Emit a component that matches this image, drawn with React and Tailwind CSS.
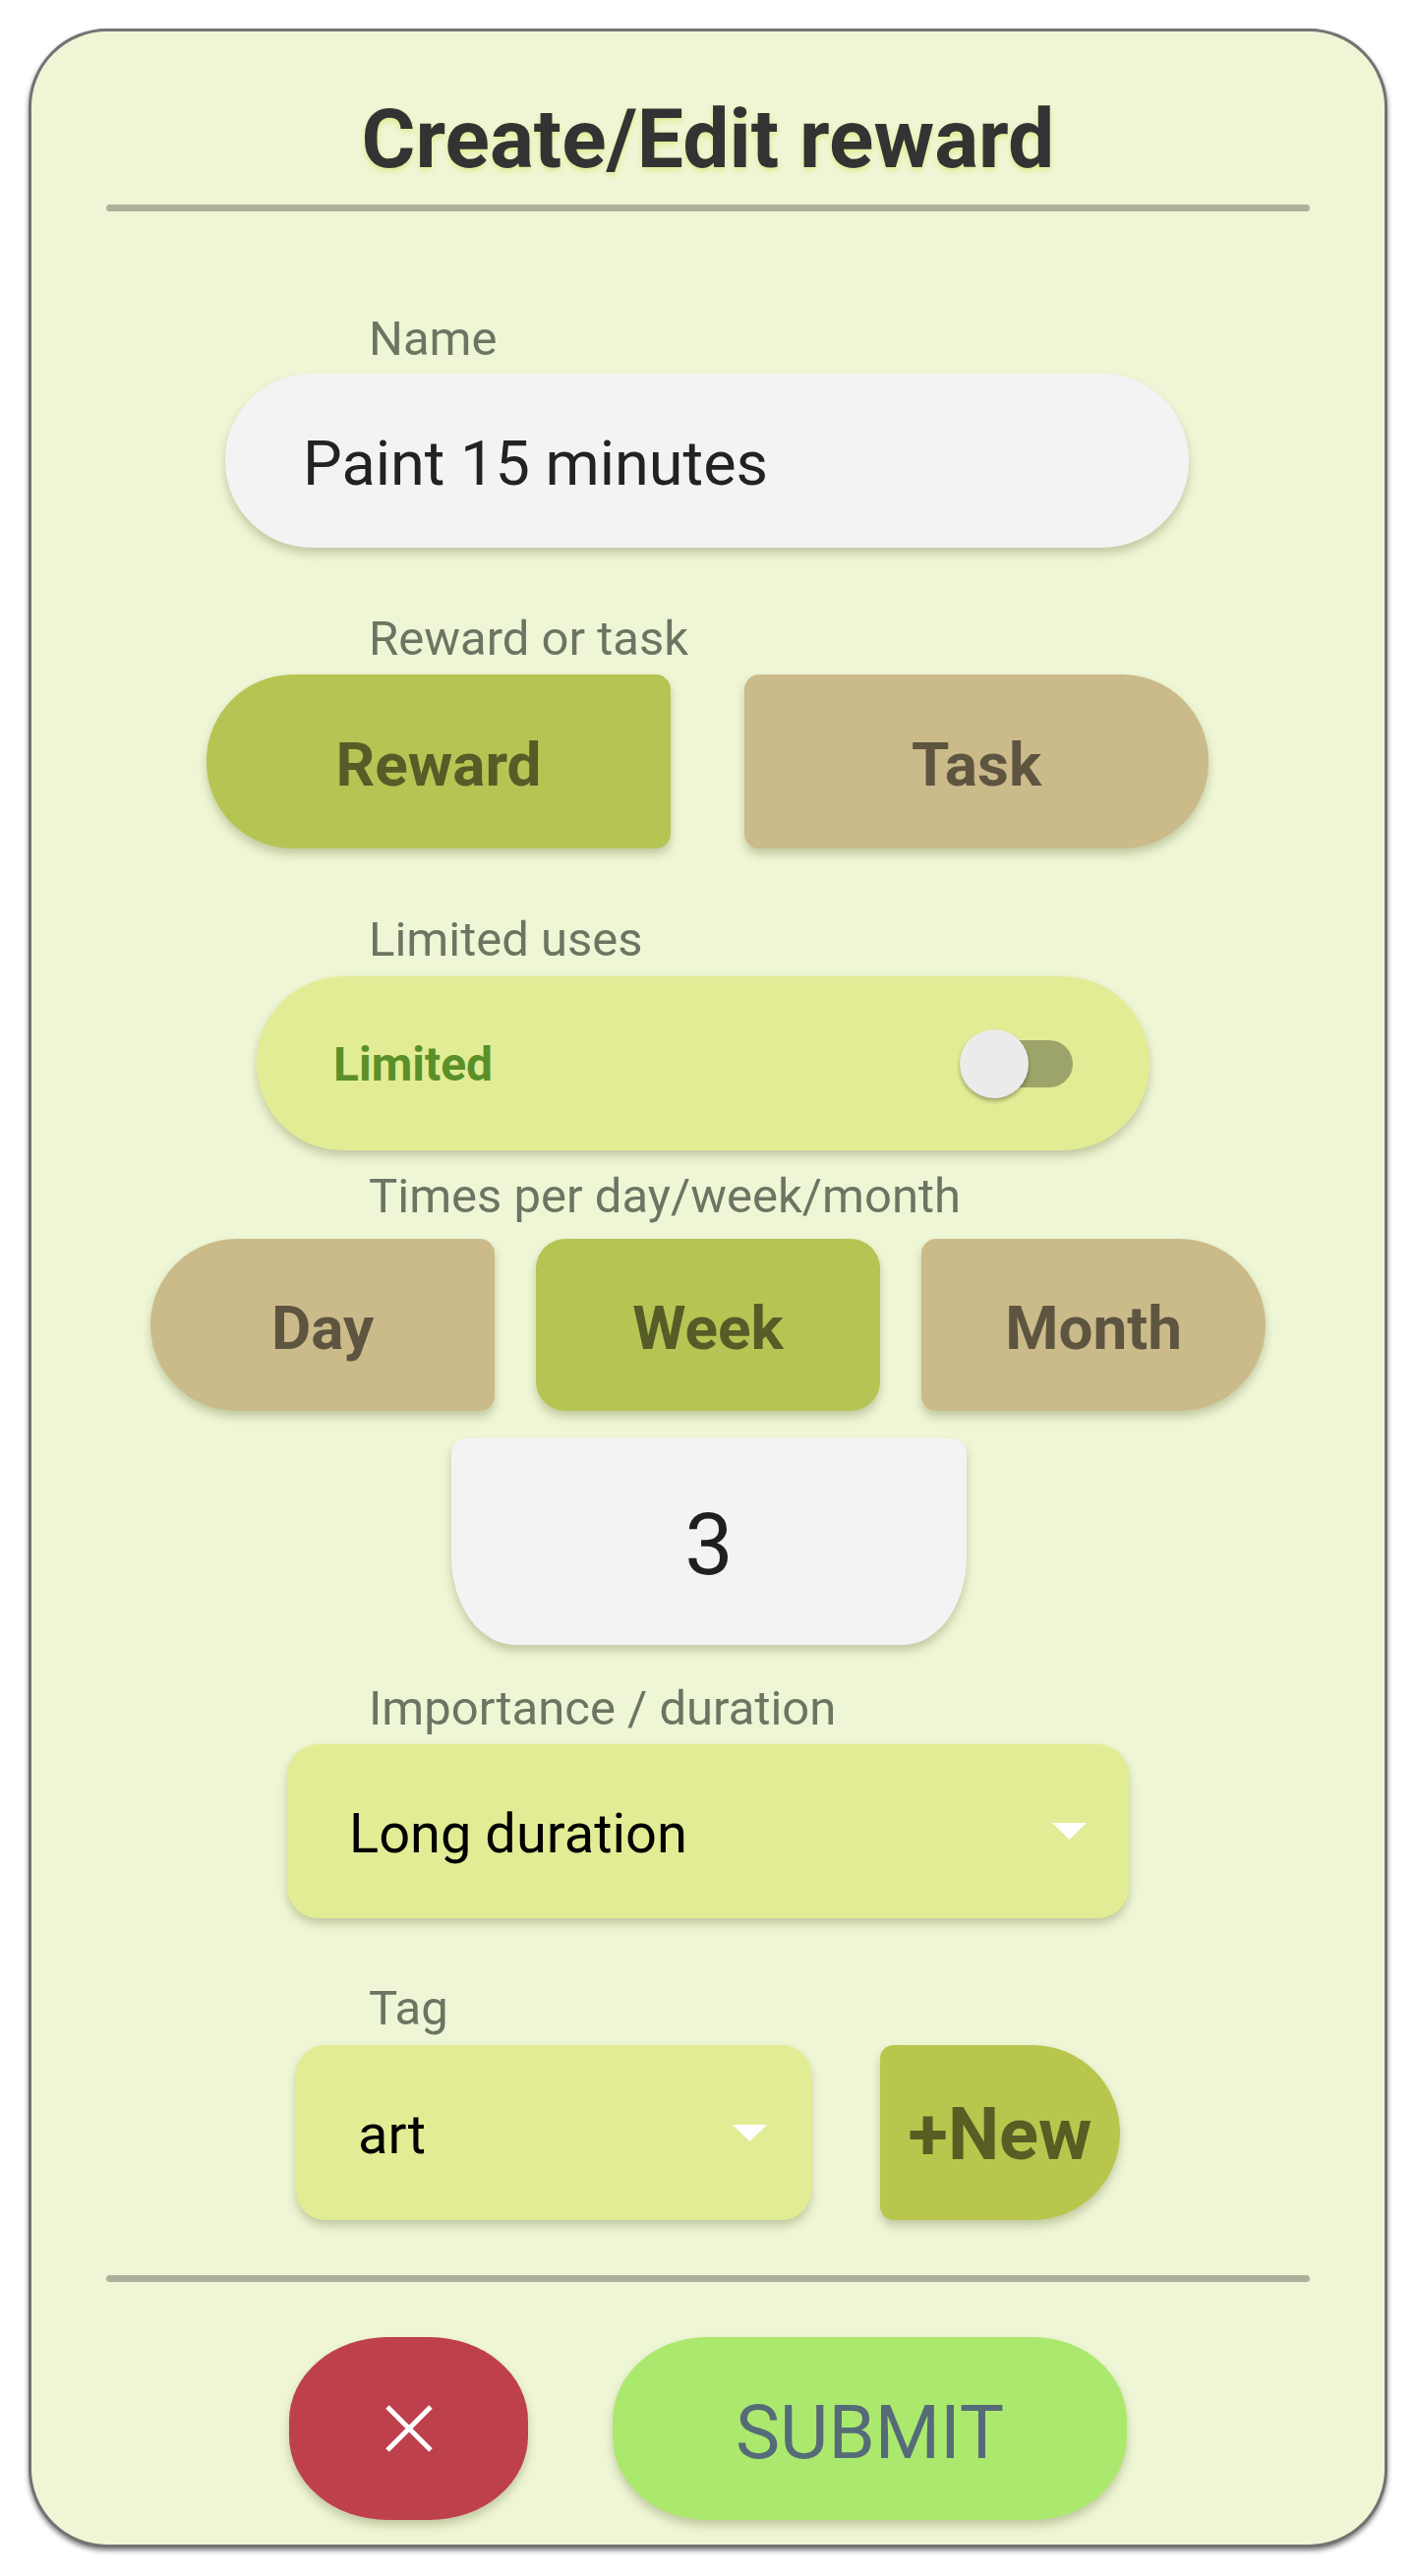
import { useState } from 'react';

function Caret() {
  return (
    <svg width="35" height="17" viewBox="0 0 35 17" className="shrink-0">
      <path d="M0 0 H35 L17.5 17 Z" fill="#ffffff" />
    </svg>
  );
}

export default function App() {
  const [kind, setKind] = useState('reward');
  const [period, setPeriod] = useState('week');
  const [limited, setLimited] = useState(false);

  const labelClass = "ml-[343px] h-[48px] text-[49px] leading-none text-[#6d7462]";
  const shadow = "shadow-[0_6px_10px_rgba(80,90,30,0.28)]";
  const on = "bg-[#b6c453] text-[#555c27]";
  const off = "bg-[#cbbb8a] text-[#5e5540]";

  return (
    <div className="min-h-[2620px] bg-white px-[29px] pt-[29px] font-['Roboto',sans-serif]">
      <div className="flex w-[1382px] flex-col rounded-[80px] border-[3px] border-[#737373] bg-[#eff6d6] pb-[25px] shadow-[0_3px_5px_rgba(0,0,0,0.5)]">
        <h1 className="mt-[68px] h-[84px] text-center text-[84px] font-bold leading-none text-[#333333] [text-shadow:0_3px_6px_#dbec8a]">
          Create/Edit reward
        </h1>
        <div className="mx-auto mt-[24px] h-[7px] w-[1224px] rounded-full bg-[#abb19a]" />

        <div className={`${labelClass} mt-[105px]`}>Name</div>
        <div className={`ml-[197px] mt-[12px] flex h-[177px] w-[980px] items-center rounded-[88px] bg-[#f3f3f3] pl-[79px] pt-[6px] text-[63px] leading-none text-[#222222] ${shadow}`}>
          Paint 15 minutes
        </div>

        <div className={`${labelClass} mt-[68px]`}>Reward or task</div>
        <div className="ml-[178px] mt-[13px] flex gap-[75px]">
          <button
            onClick={() => setKind('reward')}
            className={`flex h-[177px] w-[472px] items-center justify-center rounded-l-[88px] rounded-r-[15px] pt-[6px] text-[62px] font-bold leading-none ${shadow} ${kind === 'reward' ? on : off}`}
          >
            Reward
          </button>
          <button
            onClick={() => setKind('task')}
            className={`flex h-[177px] w-[472px] items-center justify-center rounded-l-[15px] rounded-r-[88px] pt-[6px] text-[62px] font-bold leading-none ${shadow} ${kind === 'task' ? on : off}`}
          >
            Task
          </button>
        </div>

        <div className={`${labelClass} mt-[68px]`}>Limited uses</div>
        <div className={`ml-[229px] mt-[14px] flex h-[177px] w-[908px] items-center justify-between rounded-[88px] bg-[#e2ec94] px-[78px] ${shadow}`}>
          <span className="pt-[3px] text-[48px] font-bold leading-none text-[#5a8f2a]">Limited</span>
          <button onClick={() => setLimited(!limited)} className="relative h-[70px] w-[115px]">
            <span className="absolute right-0 top-[11px] h-[48px] w-[105px] rounded-full bg-[#9da46a]" />
            <span className={`absolute top-0 h-[70px] w-[70px] rounded-full bg-[#ebebeb] shadow-[0_3px_4px_rgba(0,0,0,0.3)] ${limited ? 'right-0' : 'left-0'}`} />
          </button>
        </div>

        <div className={`${labelClass} mt-[22px]`}>Times per day/week/month</div>
        <div className="ml-[121px] mt-[20px] flex gap-[42px]">
          <button
            onClick={() => setPeriod('day')}
            className={`flex h-[175px] w-[350px] items-center justify-center rounded-l-[88px] rounded-r-[15px] pt-[6px] text-[62px] font-bold leading-none ${shadow} ${period === 'day' ? on : off}`}
          >
            Day
          </button>
          <button
            onClick={() => setPeriod('week')}
            className={`flex h-[175px] w-[350px] items-center justify-center rounded-[30px] pt-[6px] text-[62px] font-bold leading-none ${shadow} ${period === 'week' ? on : off}`}
          >
            Week
          </button>
          <button
            onClick={() => setPeriod('month')}
            className={`flex h-[175px] w-[350px] items-center justify-center rounded-l-[15px] rounded-r-[88px] pt-[6px] text-[62px] font-bold leading-none ${shadow} ${period === 'month' ? on : off}`}
          >
            Month
          </button>
        </div>

        <div className={`ml-[427px] mt-[28px] flex h-[210px] w-[524px] items-center justify-center rounded-t-[15px] rounded-bl-[65px_90px] rounded-br-[65px_90px] bg-[#f3f3f3] pt-[6px] text-[88px] leading-none text-[#1f1f1f] ${shadow}`}>
          3
        </div>

        <div className={`${labelClass} mt-[40px]`}>Importance / duration</div>
        <div className={`ml-[260px] mt-[13px] flex h-[177px] w-[856px] items-center justify-between rounded-[32px] bg-[#e2ec94] pl-[63px] pr-[43px] ${shadow}`}>
          <span className="pt-[4px] text-[56px] leading-none text-black">Long duration</span>
          <Caret />
        </div>

        <div className={`${labelClass} mt-[67px]`}>Tag</div>
        <div className="ml-[269px] mt-[14px] flex gap-[70px]">
          <div className={`flex h-[178px] w-[524px] items-center justify-between rounded-[30px] bg-[#e2ec94] pl-[63px] pr-[45px] ${shadow}`}>
            <span className="pt-[4px] text-[56px] leading-none text-black">art</span>
            <Caret />
          </div>
          <button className={`flex h-[178px] w-[244px] items-center justify-center rounded-l-[14px] rounded-r-[89px] bg-[#b8c64e] pt-[4px] text-[74px] font-bold leading-none text-[#565e24] ${shadow}`}>
            +New
          </button>
        </div>

        <div className="mx-auto mt-[56px] h-[7px] w-[1224px] rounded-full bg-[#abb19a]" />

        <div className="ml-[262px] mt-[56px] flex gap-[86px]">
          <button className={`flex h-[186px] w-[243px] items-center justify-center rounded-[100px/85px] bg-[#be404d] ${shadow}`}>
            <svg width="50" height="50" viewBox="0 0 50 50">
              <path d="M3 3 L47 47 M47 3 L3 47" stroke="#ffffff" strokeWidth="5" />
            </svg>
          </button>
          <button className={`flex h-[186px] w-[523px] items-center justify-center rounded-[95px/85px] bg-[#abe96e] pt-[8px] text-[76px] leading-none text-[#566b78] ${shadow}`}>
            SUBMIT
          </button>
        </div>
      </div>
    </div>
  );
}
